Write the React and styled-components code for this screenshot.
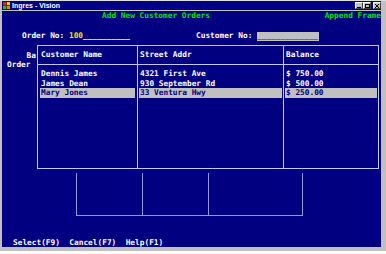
import React from 'react';
import styled, { createGlobalStyle } from 'styled-components';

const GlobalStyle = createGlobalStyle`
  html, body {
    margin: 0;
    padding: 0;
    background: #ffffff;
  }
  * {
    box-sizing: border-box;
  }
`;

const Window = styled.div`
  display: flex;
  flex-direction: column;
  width: 386px;
  height: 251px;
  padding: 0 5px 4px 2px;
  background: #c0c0c0;
  border-top: 1px solid #dfdfdf;
  font-family: "DejaVu Sans Mono", "Liberation Mono", monospace;
  font-size: 7.8px;
  font-weight: bold;
`;

const TitleBar = styled.div`
  display: flex;
  align-items: center;
  height: 9px;
  padding-left: 1px;
  background: #000080;
  color: #ffffff;
  font-family: "Liberation Sans", Arial, sans-serif;
  font-size: 7px;
  font-weight: bold;
  .title {
    margin-left: 2px;
    line-height: 9px;
  }
`;

const WinButtons = styled.div`
  display: flex;
  margin-left: auto;
`;

const WinButton = styled.div`
  display: flex;
  align-items: center;
  justify-content: center;
  width: 8px;
  height: 7px;
  margin-left: ${p => (p.$gap ? '2px' : '0')};
  background: #c0c0c0;
  border-top: 1px solid #ffffff;
  border-left: 1px solid #ffffff;
  border-right: 1px solid #404040;
  border-bottom: 1px solid #404040;
`;

const Body = styled.div`
  display: flex;
  flex-direction: column;
  flex: 1;
  background: #000080;
  border-top: 1px solid #c0c0c0;
  color: #ffffff;
`;

const HeadingRow = styled.div`
  display: flex;
  height: 10px;
  line-height: 10px;
  padding-left: 100px;
  color: #00e000;
  white-space: pre;
`;

const Append = styled.span`
  margin-left: auto;
`;

const OrderRow = styled.div`
  display: flex;
  align-items: center;
  height: 10px;
  margin-top: 10px;
  padding-left: 20px;
  line-height: 10px;
  white-space: pre;
`;

const Field = styled.div`
  display: flex;
  align-items: center;
  width: ${p => p.$width || 'auto'};
`;

const Value = styled.span`
  color: ${p => p.$color || '#ffffff'};
`;

const InputBox = styled.span`
  display: inline-block;
  width: 62px;
  height: 9px;
  line-height: 7px;
  background: #c0c0c0;
  color: #5050a8;
`;

const Content = styled.div`
  display: flex;
  margin-top: 4px;
`;

const HiddenLabels = styled.div`
  display: flex;
  flex-direction: column;
  width: 35px;
  padding-top: 6px;
  line-height: 9px;
  .ba {
    text-align: right;
    padding-right: 1px;
  }
  .order {
    padding-left: 5px;
  }
`;

const Table = styled.div`
  display: flex;
  width: 342px;
  height: 124px;
  border: 1px solid #c4c4ec;
`;

const Column = styled.div`
  display: flex;
  flex-direction: column;
  width: ${p => p.$width || 'auto'};
  flex: ${p => (p.$width ? 'none' : '1')};
  border-right: ${p => (p.$last ? 'none' : '1px solid #c4c4ec')};
`;

const ColHead = styled.div`
  height: 19px;
  line-height: 18px;
  padding-left: ${p => p.$pad + 1}px;
  border-bottom: 1px solid #c4c4ec;
  white-space: pre;
`;

const Rows = styled.div`
  display: flex;
  flex-direction: column;
  padding: 4px ${p => p.$pad}px 0 ${p => p.$pad}px;
`;

const Cell = styled.div`
  height: 9.5px;
  line-height: 9.5px;
  padding-left: 1px;
  white-space: pre;
  background: ${p => (p.$selected ? '#c0c0c0' : 'transparent')};
  color: ${p => (p.$selected ? '#000080' : '#ffffff')};
`;

const Bracket = styled.div`
  display: flex;
  height: 43px;
  margin-top: 4px;
  margin-left: 74px;
`;

const BracketCell = styled.div`
  width: ${p => p.$width}px;
  border-left: 1px solid #9898d8;
  border-bottom: 1px solid #9898d8;
  border-right: ${p => (p.$last ? '1px solid #9898d8' : 'none')};
`;

const Footer = styled.div`
  height: 8px;
  margin-top: auto;
  padding-left: 11px;
  line-height: 8px;
  white-space: pre;
`;

const AppIcon = () => (
  <svg width="7" height="7" viewBox="0 0 7 7">
    <rect x="0" y="0" width="7" height="7" fill="#603000" />
    <rect x="0" y="0" width="3" height="3" fill="#e02020" />
    <rect x="4" y="0" width="3" height="3" fill="#f0d000" />
    <rect x="0" y="4" width="3" height="3" fill="#20c020" />
    <rect x="4" y="4" width="3" height="3" fill="#f08000" />
  </svg>
);

const columns = [
  { title: 'Customer Name', width: '100px', pad: 2, cells: ['Dennis James', 'James Dean', 'Mary Jones'] },
  { title: 'Street Addr', width: '146px', pad: 1, cells: ['4321 First Ave', '930 September Rd', '33 Ventura Hwy'] },
  { title: 'Balance', pad: 1, cells: ['$ 750.00', '$ 500.00', '$ 250.00'], last: true },
];

const selectedRow = 2;

export default function App() {
  return (
    <>
      <GlobalStyle />
      <Window>
        <TitleBar>
          <AppIcon />
          <span className="title">Ingres - Vision</span>
          <WinButtons>
            <WinButton>
              <svg width="4" height="4" viewBox="0 0 4 4"><rect x="0" y="3" width="4" height="1" fill="#000" /></svg>
            </WinButton>
            <WinButton>
              <svg width="5" height="4" viewBox="0 0 5 4"><rect x="0.5" y="0.5" width="4" height="3" fill="none" stroke="#000" strokeWidth="1" /></svg>
            </WinButton>
            <WinButton $gap>
              <svg width="4" height="4" viewBox="0 0 4 4"><path d="M0 0 L4 4 M4 0 L0 4" stroke="#000" strokeWidth="1" /></svg>
            </WinButton>
          </WinButtons>
        </TitleBar>
        <Body>
          <HeadingRow>
            <span>Add New Customer Orders</span>
            <Append>Append Frame</Append>
          </HeadingRow>
          <OrderRow>
            <Field $width="174px">
              <span>Order No: </span>
              <Value $color="#e8e800">100</Value>
              <Value>__________</Value>
            </Field>
            <Field>
              <span>Customer No: </span>
              <InputBox>_____________</InputBox>
            </Field>
          </OrderRow>
          <Content>
            <HiddenLabels>
              <span className="ba">Ba</span>
              <span className="order">Order</span>
            </HiddenLabels>
            <Table>
              {columns.map(col => (
                <Column key={col.title} $width={col.width} $last={col.last}>
                  <ColHead $pad={col.pad}>{col.title}</ColHead>
                  <Rows $pad={col.pad}>
                    {col.cells.map((c, i) => (
                      <Cell key={c} $selected={i === selectedRow}>{c}</Cell>
                    ))}
                  </Rows>
                </Column>
              ))}
            </Table>
          </Content>
          <Bracket>
            <BracketCell $width={66} />
            <BracketCell $width={66} />
            <BracketCell $width={95} $last />
          </Bracket>
          <Footer>Select(F9)  Cancel(F7)  Help(F1)</Footer>
        </Body>
      </Window>
    </>
  );
}
